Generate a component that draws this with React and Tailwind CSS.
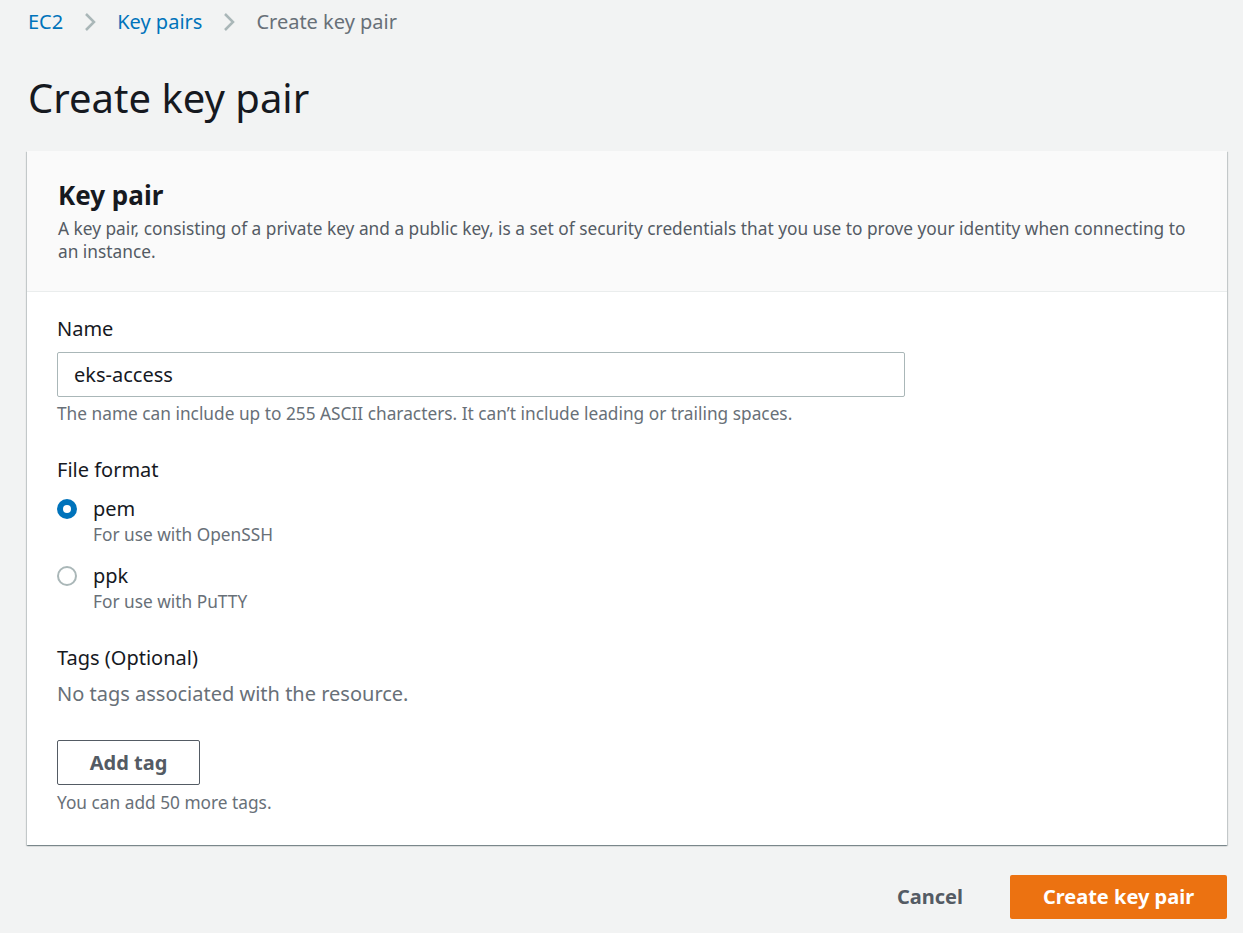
import React, { useState } from 'react';

const Chevron = () => (
  <svg width="14" height="22" viewBox="0 0 14 22" className="mx-[20px]">
    <path d="M3 3l8 8-8 8" fill="none" stroke="#aab7b8" strokeWidth="2.5" />
  </svg>
);

const Radio = ({ checked }) =>
  checked ? (
    <span className="block w-5 h-5 rounded-full bg-[#0073bb] flex items-center justify-center">
      <span className="block w-2 h-2 rounded-full bg-white" />
    </span>
  ) : (
    <span className="block w-5 h-5 rounded-full border-2 border-[#aab7b8] bg-white" />
  );

export default function App() {
  const [format, setFormat] = useState('pem');
  const options = [
    { id: 'pem', label: 'pem', hint: 'For use with OpenSSH' },
    { id: 'ppk', label: 'ppk', hint: 'For use with PuTTY' },
  ];

  return (
    <div className="min-h-[933px] bg-[#f2f3f3] pl-[27px] pr-[16px] pt-[8px] pb-[14px] text-[#16191f]" style={{ fontFamily: '"Noto Sans", "Open Sans", sans-serif' }}>
      {/* breadcrumbs */}
      <nav className="flex items-center h-[28px] text-[20px] pl-[1px]">
        <a className="text-[#0073bb]">EC2</a>
        <Chevron />
        <a className="text-[#0073bb]">Key pairs</a>
        <Chevron />
        <span className="text-[#687078]">Create key pair</span>
      </nav>

      <h1 className="text-[40px] leading-[50px] mt-[37px] mb-[28px] pl-[1px]">Create key pair</h1>

      <div className="bg-white shadow-[0_1px_1px_0_rgba(0,28,36,0.3),1px_1px_1px_0_rgba(0,28,36,0.15),-1px_1px_1px_0_rgba(0,28,36,0.15)]">
        <div className="bg-[#fafafa] border-b border-[#eaeded] pl-[31px] pr-[24px] pt-[27px] pb-[28px]">
          <h2 className="text-[26px] leading-[34px] font-bold">Key pair</h2>
          <p className="text-[17.3px] leading-[23px] text-[#545b64] mt-[5px]">
            A key pair, consisting of a private key and a public key, is a set of security credentials that you use to prove your identity when connecting to an instance.
          </p>
        </div>

        <div className="px-[30px] pt-[23px] pb-[30px]">
          <label className="block text-[20px] leading-[28px]">Name</label>
          <input
            defaultValue="eks-access"
            className="mt-[9px] block w-[848px] h-[45px] border border-[#aab7b8] rounded-[2px] px-[16px] text-[20px] text-[#16191f] bg-white outline-none"
          />
          <p className="text-[17.3px] leading-[24px] text-[#687078] mt-[5px]">
            The name can include up to 255 ASCII characters. It can’t include leading or trailing spaces.
          </p>

          <div className="mt-[30px] text-[20px] leading-[28px]">File format</div>
          <div className="mt-[11px] flex flex-col gap-[15px]">
            {options.map((o) => (
              <div key={o.id} className="flex items-start cursor-pointer" onClick={() => setFormat(o.id)}>
                <span className="mt-[4px]"><Radio checked={format === o.id} /></span>
                <div className="ml-[16px]">
                  <div className="text-[20px] leading-[28px]">{o.label}</div>
                  <div className="text-[17.3px] leading-[24px] text-[#687078]">{o.hint}</div>
                </div>
              </div>
            ))}
          </div>

          <div className="mt-[30px] text-[20px] leading-[28px]">Tags (Optional)</div>
          <p className="mt-[8px] text-[20px] leading-[28px] text-[#687078]">No tags associated with the resource.</p>
          <button className="mt-[32px] h-[45px] w-[143px] border border-[#545b64] rounded-[2px] bg-white text-[20px] font-bold text-[#545b64]">
            Add tag
          </button>
          <p className="mt-[6px] text-[17.3px] leading-[24px] text-[#687078]">You can add 50 more tags.</p>
        </div>
      </div>

      <div className="flex justify-end items-center mt-[30px] gap-[24px]">
        <button className="h-[44px] px-[23px] text-[20px] font-bold text-[#545b64]">Cancel</button>
        <button className="h-[44px] w-[217px] rounded-[2px] bg-[#ec7211] text-white text-[20px] font-bold">
          Create key pair
        </button>
      </div>
    </div>
  );
}
